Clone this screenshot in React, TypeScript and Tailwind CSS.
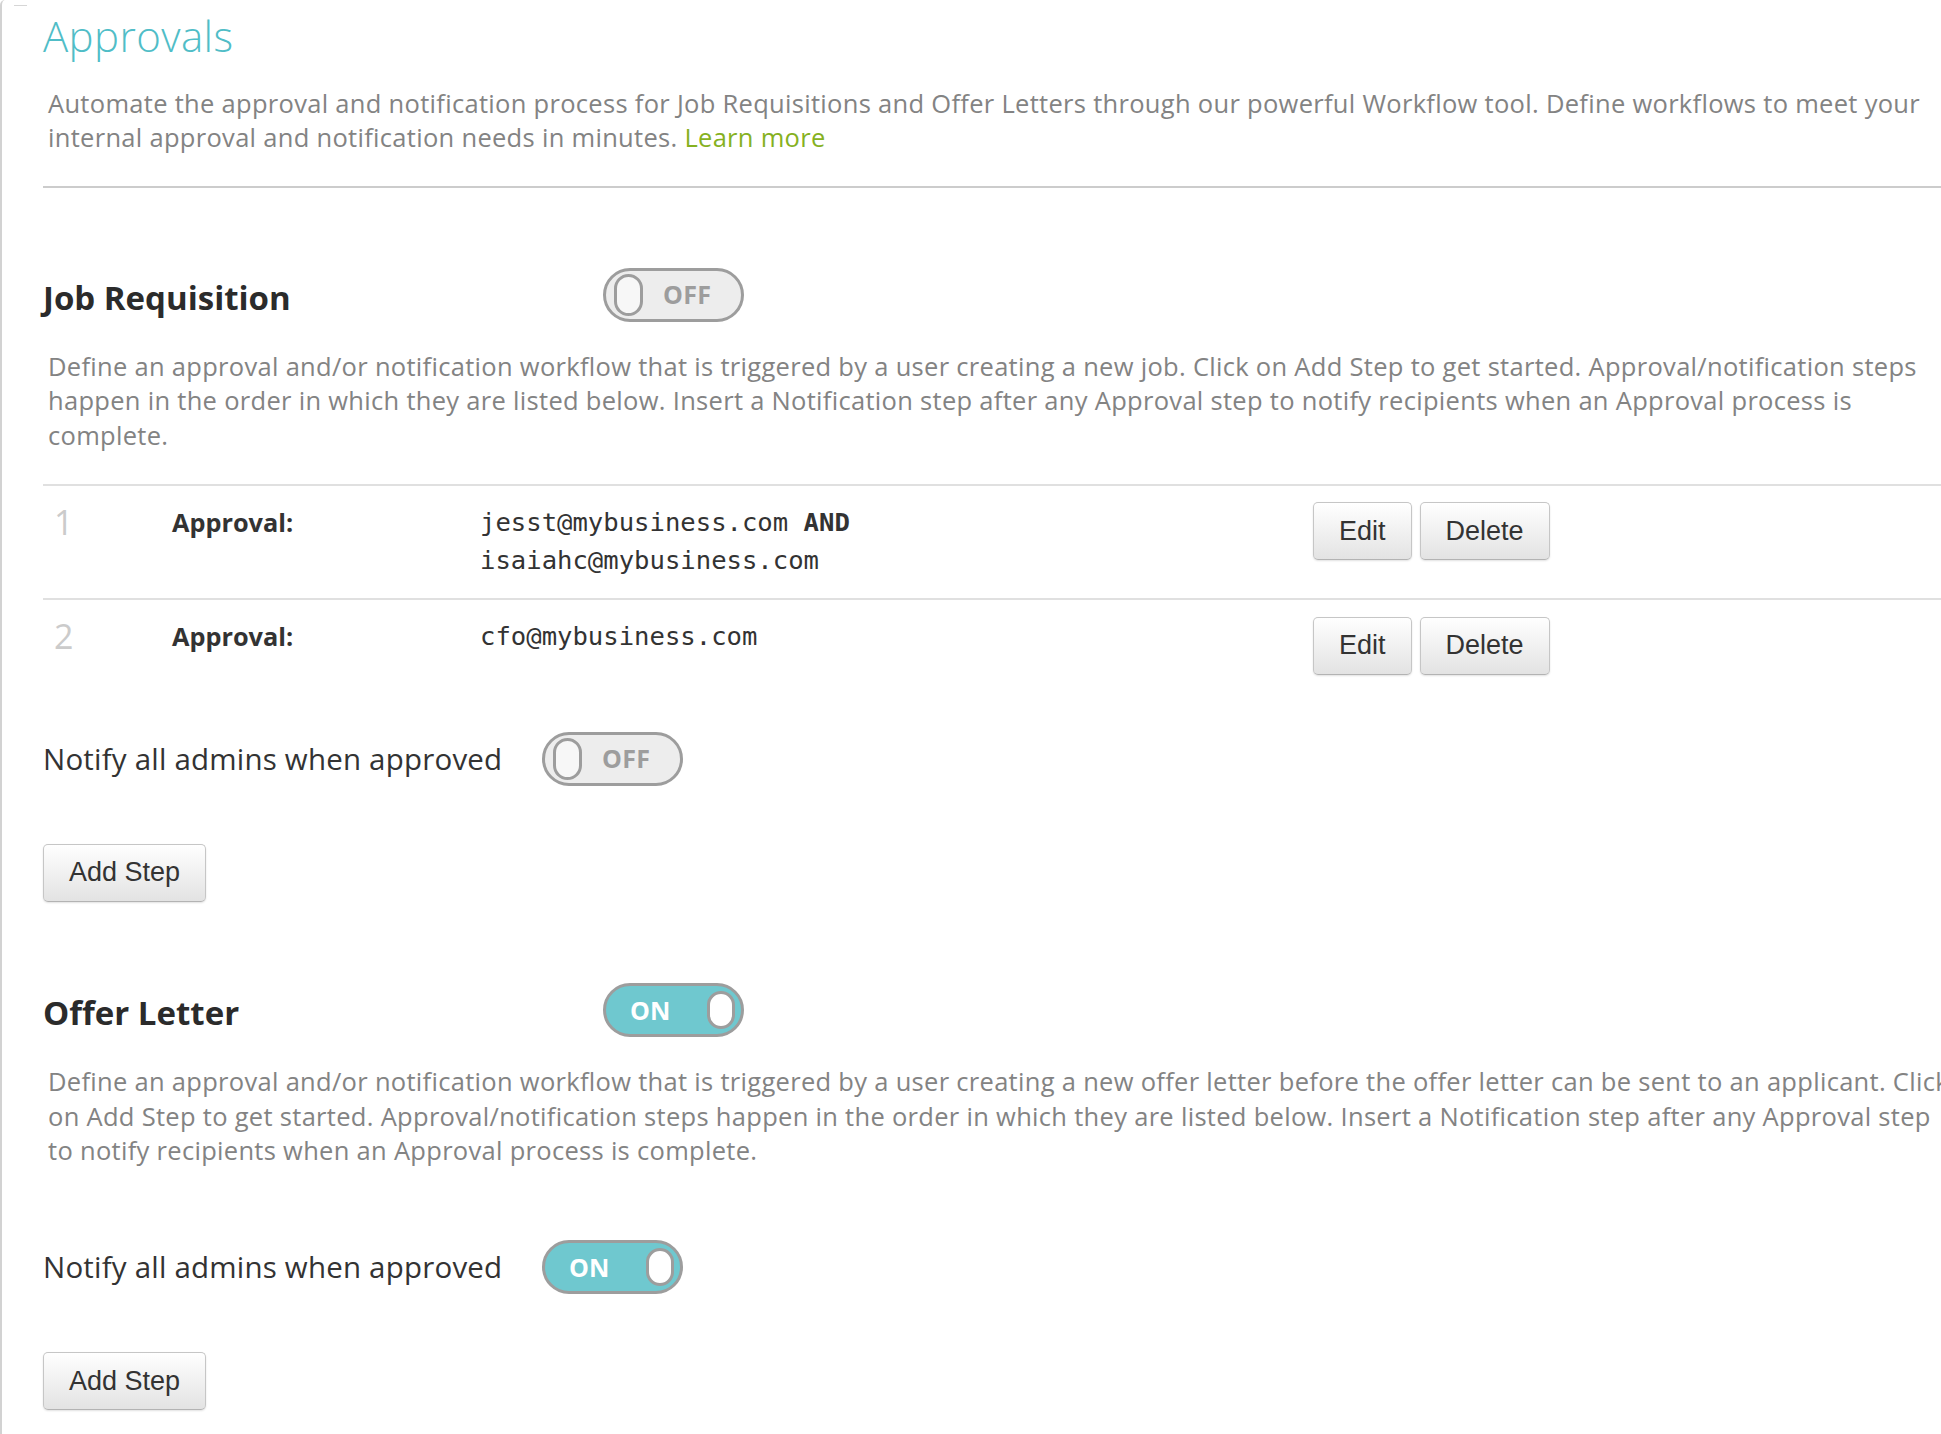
import React from "react";

function Toggle({ on }: { on: boolean }) {
  if (on) {
    return (
      <div className="flex h-[54px] w-[141px] shrink-0 items-center justify-between rounded-full border-[3px] border-[#9d9d9d] bg-[#6fc8cf] pl-[24px] pr-[6px]">
        <span className="font-['Open_Sans',sans-serif] text-[25px] font-bold leading-none text-white">ON</span>
        <span className="h-[38px] w-[28px] rounded-full border-[3px] border-[#9d9d9d] bg-white" />
      </div>
    );
  }
  return (
    <div className="flex h-[54px] w-[141px] shrink-0 items-center rounded-full border-[3px] border-[#9d9d9d] bg-[#ededed] pl-[8px]">
      <span className="h-[42px] w-[29px] rounded-full border-[3px] border-[#9d9d9d] bg-[#f7f7f7]" />
      <span className="ml-[20px] font-['Open_Sans',sans-serif] text-[25px] font-bold leading-none tracking-[0.3px] text-[#9d9d9d]">OFF</span>
    </div>
  );
}

function Btn({ label }: { label: string }) {
  return (
    <button className="h-[58px] shrink-0 rounded-[5px] border border-[#c6c6c6] border-b-[#b3b3b3] bg-linear-to-b from-white to-[#e3e3e3] px-[25px] font-['Liberation_Sans',Arial,sans-serif] text-[27px] leading-none text-[#333333] shadow-[0_1px_2px_rgba(0,0,0,0.12)]">
      {label}
    </button>
  );
}

function StepRow({
  n,
  emails,
  first,
}: {
  n: string;
  emails: React.ReactNode;
  first?: boolean;
}) {
  return (
    <div className="flex items-start border-t-2 border-[#e0e0e0] pb-[18px] pt-[17px]">
      <div className="w-[129px] shrink-0 pl-[11px] font-['Open_Sans',sans-serif] text-[34px] font-normal leading-[38px] text-[#cbcbcb]">
        {n}
      </div>
      <div className="w-[308px] shrink-0 font-['Open_Sans',sans-serif] text-[25.3px] font-bold leading-[38px] text-[#333333]">
        Approval:
      </div>
      <div className="w-[833px] shrink-0 font-['DejaVu_Sans_Mono',monospace] text-[25.6px] leading-[38.3px] text-[#333333]">
        {emails}
      </div>
      <div className={first ? "-mt-px flex gap-[8px]" : "flex gap-[8px]"}>
        <Btn label="Edit" />
        <Btn label="Delete" />
      </div>
    </div>
  );
}

function Desc({ lines, extra }: { lines: string[]; extra?: React.ReactNode }) {
  return (
    <div className="pl-[5px] font-['Open_Sans',sans-serif] text-[25.5px] leading-[34.4px] tracking-[0.3px] text-[#838383]">
      {lines.map((l, i) => (
        <span key={i} className="block whitespace-nowrap">
          {l}
          {i === lines.length - 1 ? extra : null}
        </span>
      ))}
    </div>
  );
}

function NotifyRow({ on, className }: { on: boolean; className: string }) {
  return (
    <div className={`flex items-center ${className}`}>
      <div className="w-[499px] shrink-0 whitespace-nowrap font-['Open_Sans',sans-serif] text-[29.5px] leading-[40px] tracking-[0.2px] text-[#333333]">
        Notify all admins when approved
      </div>
      <Toggle on={on} />
    </div>
  );
}

function SectionHeader({ title, on, className }: { title: string; on: boolean; className: string }) {
  return (
    <div className={`flex items-start ${className}`}>
      <h2 className="mt-[10px] w-[560px] shrink-0 font-['Open_Sans',sans-serif] text-[33px] font-bold leading-[40px] text-[#2b2b2b]">
        {title}
      </h2>
      <Toggle on={on} />
    </div>
  );
}

export default function App() {
  return (
    <div className="relative min-h-screen w-full overflow-hidden bg-white">
      <span className="absolute left-[14px] top-[5px] h-px w-[13px] bg-[#d6d6d6]" />
      <div className="min-h-[1434px] w-[2010px] rounded-tl-[5px] border-l-2 border-[#d2d2d2] pb-[40px] pl-[41px] pt-[14px]">
        <h1 className="font-['Open_Sans',sans-serif] text-[42px] font-light leading-[44px] tracking-[0.4px] text-[#50bdc7]">
          Approvals
        </h1>
        <div className="mt-[28px]">
          <Desc
            lines={[
              "Automate the approval and notification process for Job Requisitions and Offer Letters through our powerful Workflow tool. Define workflows to meet your",
              "internal approval and notification needs in minutes. ",
            ]}
            extra={<a className="text-[#86b11f]">Learn more</a>}
          />
        </div>
        <div className="mt-[31px] h-[2px] bg-[#cccccc]" />

        <SectionHeader title="Job Requisition" on={false} className="mt-[80px]" />
        <div className="mt-[27px]">
          <Desc
            lines={[
              "Define an approval and/or notification workflow that is triggered by a user creating a new job. Click on Add Step to get started. Approval/notification steps",
              "happen in the order in which they are listed below. Insert a Notification step after any Approval step to notify recipients when an Approval process is",
              "complete.",
            ]}
          />
        </div>
        <div className="mt-[32px]">
          <StepRow
            n="1"
            first
            emails={
              <>
                jesst@mybusiness.com <b>AND</b>
                <br />
                isaiahc@mybusiness.com
              </>
            }
          />
          <StepRow n="2" emails={<>cfo@mybusiness.com</>} />
        </div>
        <NotifyRow on={false} className="mt-[39px]" />
        <div className="mt-[58px]">
          <Btn label="Add Step" />
        </div>

        <SectionHeader title="Offer Letter" on={true} className="mt-[81.5px]" />
        <div className="mt-[27px]">
          <Desc
            lines={[
              "Define an approval and/or notification workflow that is triggered by a user creating a new offer letter before the offer letter can be sent to an applicant. Click",
              "on Add Step to get started. Approval/notification steps happen in the order in which they are listed below. Insert a Notification step after any Approval step",
              "to notify recipients when an Approval process is complete.",
            ]}
          />
        </div>
        <NotifyRow on={true} className="mt-[73px]" />
        <div className="mt-[58px]">
          <Btn label="Add Step" />
        </div>
      </div>
    </div>
  );
}
